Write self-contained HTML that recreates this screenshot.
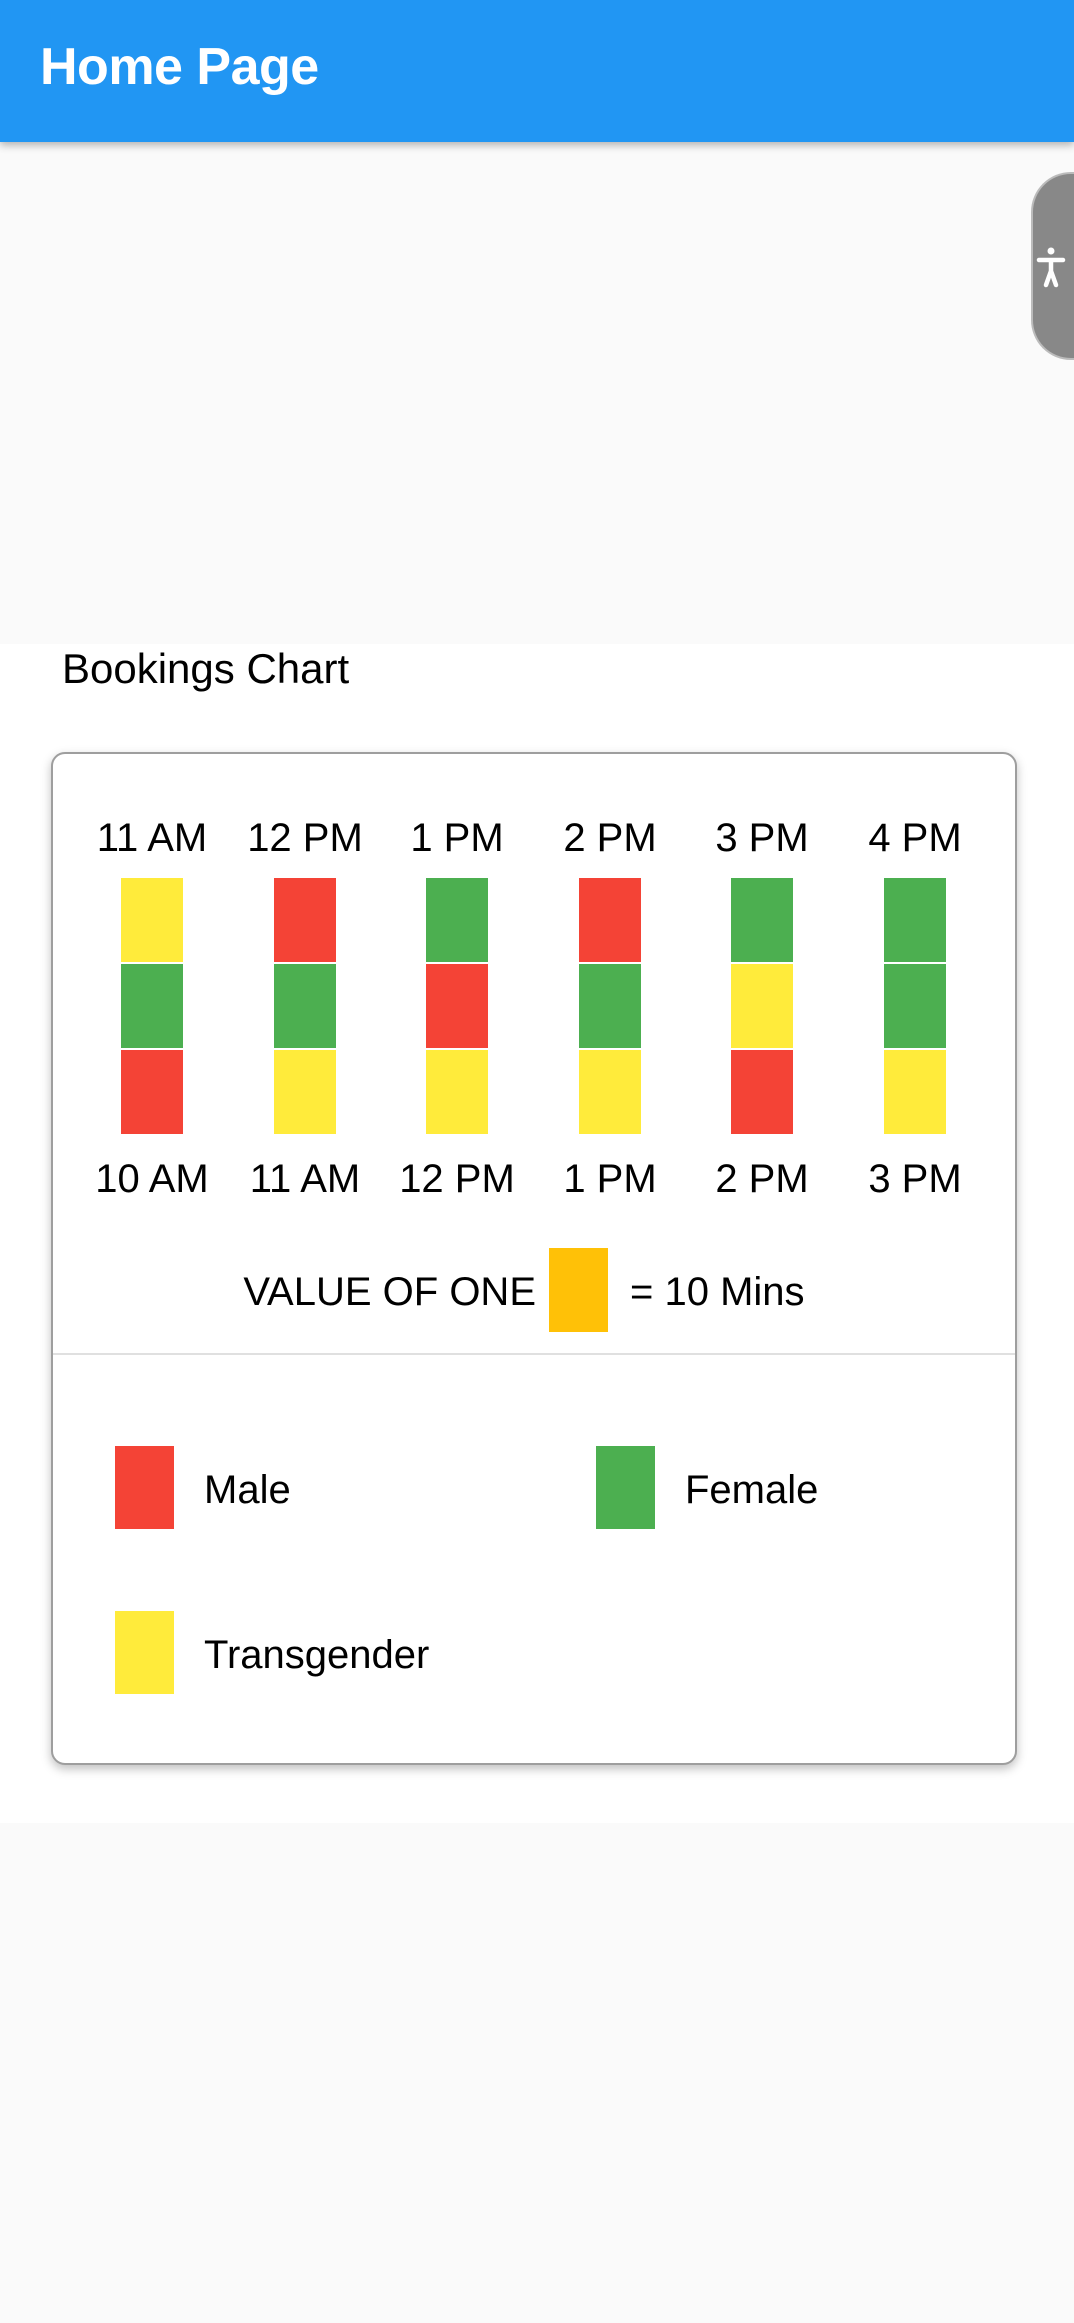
<!DOCTYPE html>
<html><head><meta charset="utf-8"><style>
*{margin:0;padding:0;box-sizing:border-box}
body{width:1074px;height:2323px;background:#fafafa;position:relative;overflow:hidden;font-family:"Liberation Sans",sans-serif;color:#000}
.abs{position:absolute}
.bar{position:absolute;left:0;top:0;width:1074px;height:142px;background:#2196f3;box-shadow:0 3px 8px rgba(0,0,0,.3);z-index:2}
.t{position:absolute;white-space:nowrap;line-height:1}
.lbl{position:absolute;width:150px;text-align:center;font-size:40px;line-height:1}
.seg{position:absolute;width:62px;height:84px}
.r{background:#f44336}.g{background:#4caf50}.y{background:#ffeb3b}
</style></head><body>
<div class="bar"><div class="t" style="left:40px;top:41px;font-size:52px;color:#fff;font-weight:bold;letter-spacing:-0.5px">Home Page</div></div>
<div class="abs" style="left:0;top:644px;width:1074px;height:1179px;background:#fff"></div>
<div class="abs" style="left:1031px;top:172px;width:45px;height:188px;background:#888;border:2px solid #bbb;border-right:none;border-radius:40px 0 0 40px"></div>
<svg class="abs" style="left:1036px;top:245px" width="30" height="45" viewBox="0 0 30 45">
<circle cx="15" cy="6" r="3.5" fill="#fff"/>
<path d="M3 15 H27 M15 15 V26 M15 26 L10 40 M15 26 L20 40" stroke="#fff" stroke-width="4.5" fill="none" stroke-linecap="round"/>
</svg>
<div class="t" style="left:62px;top:648px;font-size:42px">Bookings Chart</div>
<div class="abs" style="left:51px;top:752px;width:966px;height:1013px;background:#fff;border:2px solid #9e9e9e;border-radius:14px;box-shadow:0 4px 10px rgba(0,0,0,.25)"></div>
<div class="abs" style="left:53px;top:1353px;width:962px;height:2px;background:#e0e0e0"></div>

<div class="lbl" style="left:77px;top:818px">11 AM</div>
<div class="lbl" style="left:230px;top:818px">12 PM</div>
<div class="lbl" style="left:382px;top:818px">1 PM</div>
<div class="lbl" style="left:535px;top:818px">2 PM</div>
<div class="lbl" style="left:687px;top:818px">3 PM</div>
<div class="lbl" style="left:840px;top:818px">4 PM</div>

<div class="seg y" style="left:121px;top:878px"></div><div class="seg g" style="left:121px;top:964px"></div><div class="seg r" style="left:121px;top:1050px"></div>
<div class="seg r" style="left:274px;top:878px"></div><div class="seg g" style="left:274px;top:964px"></div><div class="seg y" style="left:274px;top:1050px"></div>
<div class="seg g" style="left:426px;top:878px"></div><div class="seg r" style="left:426px;top:964px"></div><div class="seg y" style="left:426px;top:1050px"></div>
<div class="seg r" style="left:579px;top:878px"></div><div class="seg g" style="left:579px;top:964px"></div><div class="seg y" style="left:579px;top:1050px"></div>
<div class="seg g" style="left:731px;top:878px"></div><div class="seg y" style="left:731px;top:964px"></div><div class="seg r" style="left:731px;top:1050px"></div>
<div class="seg g" style="left:884px;top:878px"></div><div class="seg g" style="left:884px;top:964px"></div><div class="seg y" style="left:884px;top:1050px"></div>

<div class="lbl" style="left:77px;top:1159px">10 AM</div>
<div class="lbl" style="left:230px;top:1159px">11 AM</div>
<div class="lbl" style="left:382px;top:1159px">12 PM</div>
<div class="lbl" style="left:535px;top:1159px">1 PM</div>
<div class="lbl" style="left:687px;top:1159px">2 PM</div>
<div class="lbl" style="left:840px;top:1159px">3 PM</div>

<div class="t" style="left:236px;width:300px;text-align:right;top:1272px;font-size:40px">VALUE OF ONE</div>
<div class="abs" style="left:549px;top:1248px;width:59px;height:84px;background:#ffc107"></div>
<div class="t" style="left:630px;top:1272px;font-size:40px">= 10 Mins</div>

<div class="abs r" style="left:115px;top:1446px;width:59px;height:83px"></div>
<div class="t" style="left:204px;top:1470px;font-size:40px">Male</div>
<div class="abs g" style="left:596px;top:1446px;width:59px;height:83px"></div>
<div class="t" style="left:685px;top:1470px;font-size:40px">Female</div>
<div class="abs y" style="left:115px;top:1611px;width:59px;height:83px"></div>
<div class="t" style="left:204px;top:1635px;font-size:40px">Transgender</div>
</body></html>
